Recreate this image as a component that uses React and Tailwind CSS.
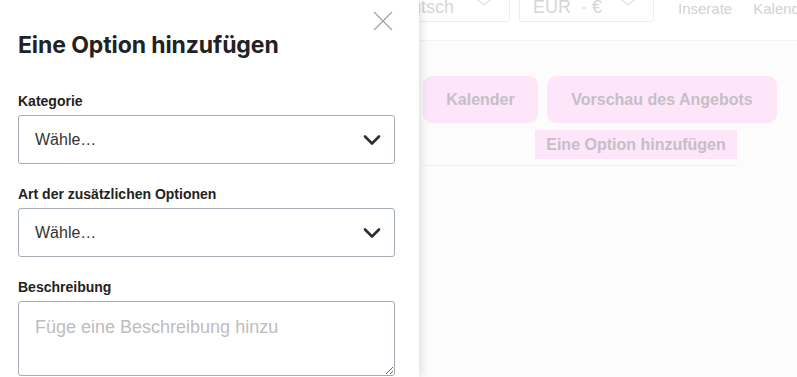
import React from 'react';

function Chevron({ className }) {
  return (
    <svg className={className} width="18" height="12" viewBox="0 0 18 12" fill="none">
      <path d="M2 2.5l7 7 7-7" stroke="currentColor" strokeWidth="2.6" strokeLinecap="round" strokeLinejoin="round" />
    </svg>
  );
}

function ThinChevron() {
  return (
    <svg className="self-end mb-[15px]" width="26" height="12" viewBox="0 0 26 12" fill="none">
      <path d="M1 1l12 10 12-10" stroke="#e2e2e2" strokeWidth="1.3" />
    </svg>
  );
}

function SelectField({ label }) {
  return (
    <div className="flex flex-col">
      <label className="text-[14px] font-bold text-[#222] leading-4 mb-[6px]">{label}</label>
      <div className="h-[49px] rounded-[3px] border border-[#a4adb7] flex items-center justify-between pl-4 pr-[13px]">
        <span className="text-[16px] text-[#333]">Wähle…</span>
        <Chevron className="text-[#2b2f36]" />
      </div>
    </div>
  );
}

function Drawer() {
  return (
    <aside className="absolute left-0 top-0 h-full w-[419px] bg-white shadow-[2px_0_9px_rgba(0,0,0,0.13)] pl-[18px] pr-[24px]">
      <button className="absolute right-[26px] top-[11px] text-[#a3a7ae]">
        <svg width="20" height="20" viewBox="0 0 20 20" fill="none">
          <path d="M1 1l18 18M19 1L1 19" stroke="currentColor" strokeWidth="1.4" />
        </svg>
      </button>
      <h2 className="pt-[31px] text-[23px] font-bold text-[#222] leading-7 tracking-[-0.1px] font-['Inter',sans-serif]">
        Eine Option hinzufügen
      </h2>
      <div className="mt-[34px] flex flex-col gap-[22px]">
        <SelectField label="Kategorie" />
        <SelectField label="Art der zusätzlichen Optionen" />
        <div className="flex flex-col">
          <label className="text-[14px] font-bold text-[#222] leading-4 mb-[6px]">Beschreibung</label>
          <textarea
            className="h-[75px] rounded-[3px] border border-[#a4adb7] px-4 py-[12px] text-[18px] placeholder-[#bdbdbd] outline-none"
            placeholder="Füge eine Beschreibung hinzu"
          />
        </div>
      </div>
    </aside>
  );
}

function Page() {
  return (
    <div className="w-full h-full">
      <header className="h-[55px] -mt-[14px] bg-white border-b border-[#f3f3f3] flex items-start gap-[9px] pl-[375px]">
        <div className="shrink-0 w-[135px] h-[36px] border border-[#ececec] rounded-[3px] flex justify-between px-3 text-[18px] text-[#d6d6d6]">
          <span className="self-end">Deutsch</span>
          <ThinChevron />
        </div>
        <div className="shrink-0 w-[135px] h-[36px] border border-[#ececec] rounded-[3px] flex justify-between pl-[13px] pr-3 text-[18px] text-[#d6d6d6]">
          <span className="self-end">EUR&nbsp; · €</span>
          <ThinChevron />
        </div>
        <nav className="shrink-0 flex gap-[21px] ml-[15px] pt-[12px] text-[15px] text-[#d2d2d2] whitespace-nowrap">
          <span>Inserate</span>
          <span>Kalender</span>
        </nav>
      </header>
      <div className="pl-[423px] pt-[35px]">
        <div className="flex gap-[9px]">
          <div className="w-[115px] h-[47px] rounded-[9px] bg-[#fde6fa] flex items-center justify-center text-[16px] font-bold text-[#c6bec6]">Kalender</div>
          <div className="w-[230px] h-[47px] rounded-[9px] bg-[#fde6fa] flex items-center justify-center text-[16px] font-bold text-[#c6bec6]">Vorschau des Angebots</div>
        </div>
        <div className="w-[314px] border-b border-[#f0f0f0] pt-[7px] pb-[6px]">
          <div className="ml-[112px] w-[202px] h-[29px] bg-[#fde6fa] flex items-center justify-center text-[16px] font-bold text-[#c6bec6]">Eine Option hinzufügen</div>
        </div>
      </div>
    </div>
  );
}

export default function App() {
  return (
    <div className="relative w-[797px] h-[377px] overflow-hidden bg-[#fcfcfc] font-['Liberation_Sans',Arial,sans-serif]">
      <Page />
      <Drawer />
    </div>
  );
}
